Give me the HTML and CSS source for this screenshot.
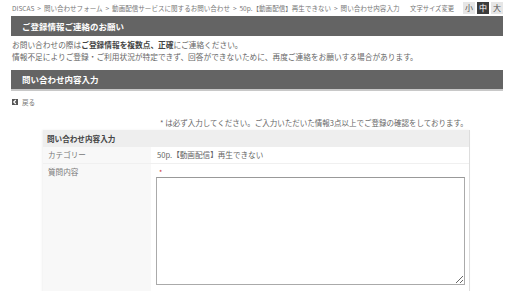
FILE: index.html
```html
<!DOCTYPE html>
<html lang="ja">
<head>
<meta charset="utf-8">
<link rel="stylesheet" href="styles.css">
</head>
<body>
<div class="page">
  <div class="topline">
    <div class="crumbs">DISCAS &nbsp;&gt;&nbsp; 問い合わせフォーム &nbsp;&gt;&nbsp; 動画配信サービスに関するお問い合わせ &nbsp;&gt;&nbsp; 50p.【動画配信】再生できない &nbsp;&gt;&nbsp; 問い合わせ内容入力</div>
    <div class="fontsize">
      <span class="fs-label">文字サイズ変更</span>
      <span class="fs-btn">小</span>
      <span class="fs-btn fs-on">中</span>
      <span class="fs-btn">大</span>
    </div>
  </div>
  <h2 class="bar">ご登録情報ご連絡のお願い</h2>
  <p class="notice">お問い合わせの際は<b>ご登録情報を複数点、正確</b>にご連絡ください。<br>情報不足によりご登録・ご利用状況が特定できず、回答ができないために、再度ご連絡をお願いする場合があります。</p>
  <h2 class="bar bar2">問い合わせ内容入力</h2>
  <div class="back"><span class="back-icon"><svg width="6" height="6" viewBox="0 0 6 6"><path d="M3.8 1 L1.8 3 L3.8 5" stroke="#fff" stroke-width="1.2" fill="none"/></svg></span>戻る</div>
  <p class="req">* は必ず入力してください。ご入力いただいた情報3点以上でご登録の確認をしております。</p>
  <div class="form">
    <div class="form-head">問い合わせ内容入力</div>
    <div class="row">
      <div class="label">カテゴリー</div>
      <div class="value">50p.【動画配信】再生できない</div>
    </div>
    <div class="row row-tall">
      <div class="label">質問内容</div>
      <div class="value">
        <div class="star">*</div>
        <textarea class="ta"></textarea>
      </div>
    </div>
  </div>
</div>
</body>
</html>
```
FILE: styles.css
```css
html, body {
  margin: 0;
  padding: 0;
  background: #fff;
}
body {
  font-family: "Noto Sans CJK JP", "Noto Sans", sans-serif;
  color: #666;
  font-size: 7.7px;
}
.page {
  margin: 0 9px 0 11px;
}
.topline {
  display: flex;
  justify-content: space-between;
  align-items: center;
  height: 16px;
}
.crumbs {
  font-size: 6.55px;
  color: #777;
  padding-left: 1px;
  white-space: nowrap;
}
.fontsize {
  display: flex;
  align-items: center;
  gap: 2px;
}
.fs-label {
  font-size: 6.3px;
  color: #777;
  margin-right: 7px;
}
.fs-btn {
  width: 12px;
  height: 12px;
  line-height: 12px;
  text-align: center;
  background: #e6e6e6;
  color: #555;
  font-size: 8px;
}
.fs-on {
  background: #3c3c3c;
  color: #fff;
}
.bar {
  margin: 0;
  height: 20px;
  line-height: 20px;
  background: #646464;
  color: #fff;
  font-size: 8.5px;
  font-weight: bold;
  padding-left: 11px;
}
.bar2 {
  height: 19px;
  line-height: 19px;
  border-bottom: 2px solid #c8c8c8;
}
.notice {
  margin: 3px 0 0 1px;
  height: 31px;
  line-height: 12px;
  font-size: 7.7px;
}
.notice b {
  color: #444;
}
.back {
  display: flex;
  align-items: center;
  gap: 4px;
  margin-top: 6px;
  padding-left: 1px;
  height: 10px;
  font-size: 6.6px;
  color: #777;
}
.back-icon {
  width: 6px;
  height: 6px;
  background: #555;
  display: inline-flex;
}
.req {
  margin: 11px 0 0 149px;
  height: 10px;
  line-height: 10px;
  font-size: 7.5px;
}
.form {
  margin: 2px 0 0 32px;
  width: 426px;
  border-right: 1px solid #ddd;
  box-shadow: -1px 0 2px rgba(0,0,0,0.06);
}
.form-head {
  height: 17px;
  line-height: 17px;
  background: #eee;
  color: #444;
  font-weight: bold;
  font-size: 7.6px;
  padding-left: 4px;
}
.row {
  display: flex;
  height: 16px;
  border-bottom: 1px solid #f0f0f0;
}
.label {
  width: 103px;
  background: #f8f8f8;
  padding: 3px 0 0 5px;
  line-height: 10px;
  font-size: 7.6px;
  color: #777;
}
.value {
  flex: 1;
  padding: 3px 0 0 6px;
  line-height: 10px;
  font-size: 7.6px;
  color: #666;
}
.row-tall {
  height: 200px;
  border-bottom: none;
}
.star {
  color: #c33;
  font-size: 7px;
  height: 10px;
  padding-left: 2px;
}
.ta {
  display: block;
  margin: 0 0 0 -1px;
  width: 309px;
  height: 108px;
  box-sizing: border-box;
  border: 1px solid #aaa;
  border-top-color: #999;
  padding: 0;
  resize: both;
  background: #fff;
}
```
